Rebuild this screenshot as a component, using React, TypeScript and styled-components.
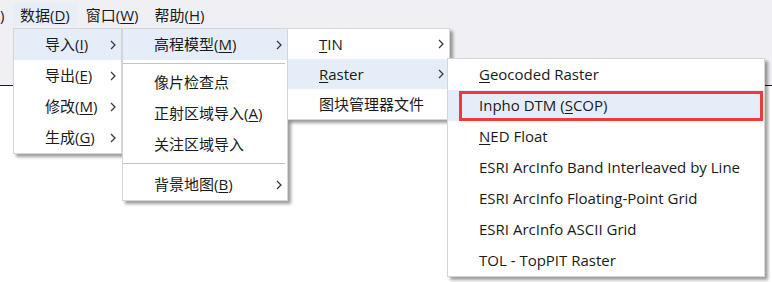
import React from "react";
import styled, { createGlobalStyle } from "styled-components";

const Global = createGlobalStyle`
  html, body { margin: 0; padding: 0; background: #ffffff; }
  body {
    width: 772px;
    height: 282px;
    overflow: hidden;
    font-family: "Open Sans", "Noto Sans CJK SC", sans-serif;
    color: #1a1a1a;
  }
`;

const Page = styled.div`
  position: relative;
  width: 772px;
  height: 282px;
  background: #ffffff;
`;

const TopArea = styled.div`
  height: 85px;
  background: #f0f0f4;
  border-bottom: 1px solid #1a1a1a;
`;

const MenuBar = styled.div`
  display: flex;
  align-items: flex-start;
  padding-top: 3px;
  font-size: 15px;
`;

const BarItem = styled.div<{ $active?: boolean; $pad?: number; $gap?: number; $w?: number }>`
  position: relative;
  height: 23px;
  display: flex;
  align-items: center;
  flex: none;
  ${(p) => (p.$w !== undefined ? `width: ${p.$w}px;` : "")}
  padding: 0 ${(p) => p.$pad ?? 7}px;
  margin-right: ${(p) => p.$gap ?? 2}px;
  background: ${(p) => (p.$active ? "#e7eef7" : "transparent")};
  white-space: nowrap;
`;

const Panel = styled.div<{ $x: number; $y: number; $w: number }>`
  position: absolute;
  left: ${(p) => p.$x}px;
  top: ${(p) => p.$y}px;
  width: ${(p) => p.$w}px;
  box-sizing: border-box;
  background: #ffffff;
  border: 1px solid #d6d6d6;
  box-shadow: 3px 3px 3px rgba(0, 0, 0, 0.38);
  display: flex;
  flex-direction: column;
  z-index: 1;
`;

const Row = styled.div<{ $h: number; $active?: boolean }>`
  position: relative;
  height: ${(p) => p.$h}px;
  display: flex;
  align-items: center;
  padding-left: 31px;
  padding-right: 5px;
  background: ${(p) => (p.$active ? "#e5eef8" : "transparent")};
  font-size: 15px;
  white-space: nowrap;
`;

const Label = styled.span`
  flex: 1;
  line-height: 1;
`;

const Key = styled.span`
  text-decoration: underline;
  text-underline-offset: 2px;
  text-decoration-thickness: 1px;
`;

const Separator = styled.div<{ $mt: number; $mb: number }>`
  height: 1px;
  margin: ${(p) => p.$mt}px 2px ${(p) => p.$mb}px 0;
  background: #c4c4c4;
`;

const Annotation = styled.span`
  position: absolute;
  left: 11px;
  right: 1px;
  top: 1px;
  bottom: 0px;
  border: 3px solid #ec3b3b;
  pointer-events: none;
`;

const Chevron = () => (
  <svg width="6" height="10" viewBox="0 0 6 10" style={{ display: "block" }}>
    <polyline points="1,1 5,5 1,9" fill="none" stroke="#3a3a3a" strokeWidth="1.3" />
  </svg>
);

const App: React.FC = () => (
  <Page>
    <Global />
    <TopArea>
      <MenuBar>
        <BarItem $pad={0} $gap={8} $w={5}>)</BarItem>
        <BarItem $active>
          数据(<Key>D</Key>)
          <Panel $x={0} $y={25} $w={109}>
            <Row $h={31} $active>
              <Label>导入(<Key>I</Key>)</Label>
              <Chevron />
              <Panel $x={108} $y={-1} $w={166}>
                <Row $h={31} $active>
                  <Label>高程模型(<Key>M</Key>)</Label>
                  <Chevron />
                  <Panel $x={164} $y={-1} $w={163}>
                    <Row $h={30}>
                      <Label><Key>T</Key>IN</Label>
                      <Chevron />
                    </Row>
                    <Row $h={30} $active>
                      <Label><Key>R</Key>aster</Label>
                      <Chevron />
                      <Panel $x={159} $y={-1} $w={318}>
                        <Row $h={31}>
                          <Label><Key>G</Key>eocoded Raster</Label>
                        </Row>
                        <Row $h={31} $active>
                          <Label>Inpho DTM (<Key>S</Key>COP)</Label>
                          <Annotation />
                        </Row>
                        <Row $h={31}>
                          <Label><Key>N</Key>ED Float</Label>
                        </Row>
                        <Row $h={31}>
                          <Label>ESRI ArcInfo Band Interleaved by Line</Label>
                        </Row>
                        <Row $h={31}>
                          <Label>ESRI ArcInfo Floating-Point Grid</Label>
                        </Row>
                        <Row $h={31}>
                          <Label>ESRI ArcInfo ASCII Grid</Label>
                        </Row>
                        <Row $h={31}>
                          <Label>TOL - TopPIT Raster</Label>
                        </Row>
                      </Panel>
                    </Row>
                    <Row $h={30}>
                      <Label>图块管理器文件</Label>
                    </Row>
                  </Panel>
                </Row>
                <Separator $mt={3} $mb={3} />
                <Row $h={31}>
                  <Label>像片检查点</Label>
                </Row>
                <Row $h={31}>
                  <Label>正射区域导入(<Key>A</Key>)</Label>
                </Row>
                <Row $h={31}>
                  <Label>关注区域导入</Label>
                </Row>
                <Separator $mt={3} $mb={5} />
                <Row $h={31}>
                  <Label>背景地图(<Key>B</Key>)</Label>
                  <Chevron />
                </Row>
              </Panel>
            </Row>
            <Row $h={31}>
              <Label>导出(<Key>E</Key>)</Label>
              <Chevron />
            </Row>
            <Row $h={31}>
              <Label>修改(<Key>M</Key>)</Label>
              <Chevron />
            </Row>
            <Row $h={31}>
              <Label>生成(<Key>G</Key>)</Label>
              <Chevron />
            </Row>
          </Panel>
        </BarItem>
        <BarItem>窗口(<Key>W</Key>)</BarItem>
        <BarItem>帮助(<Key>H</Key>)</BarItem>
      </MenuBar>
    </TopArea>
  </Page>
);

export default App;
